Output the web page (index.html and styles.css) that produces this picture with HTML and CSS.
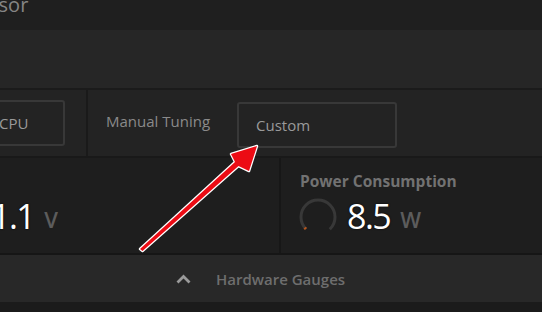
FILE: index.html
```html
<!DOCTYPE html>
<html>
<head>
    <title>Processor</title>
    <meta charset="UTF-8">
    <link rel="stylesheet" href="styles.css">
</head>
<body>
<div class="titlebar">
    <div class="title">Processor</div>
</div>

<div class="band"></div>

<div class="tuning">
    <div class="cell cell-cpu">
        <div class="select select-cpu">CPU</div>
    </div>
    <div class="cell cell-manual">
        <div class="label">Manual Tuning</div>
        <div class="select select-custom">Custom</div>
    </div>
</div>

<div class="gauges">
    <div class="gcell gcell-left">
        <div class="gauge-inner">
            <div class="gauge-label label-left">Voltage</div>
            <div class="reading">
                <svg class="dial" width="40" height="40" viewBox="0 0 40 40">
                    <circle cx="20" cy="20" r="17" fill="none" stroke="#383838" stroke-width="3"
                            stroke-dasharray="80 107" transform="rotate(135 20 20)"/>
                </svg>
                <span class="value">1.1</span>
                <span class="unit">V</span>
            </div>
        </div>
    </div>
    <div class="gcell gcell-right">
        <div class="gauge-label">Power Consumption</div>
        <div class="reading">
            <svg class="dial" width="40" height="40" viewBox="0 0 40 40">
                <circle cx="20" cy="20" r="17" fill="none" stroke="#383838" stroke-width="3"
                        stroke-dasharray="80 107" transform="rotate(135 20 20)"/>
                <circle cx="20" cy="20" r="17" fill="none" stroke="#b4541c" stroke-width="3"
                        stroke-dasharray="2 105" transform="rotate(135 20 20)"/>
            </svg>
            <span class="value">8.5</span>
            <span class="unit">W</span>
        </div>
    </div>
</div>

<div class="footer">
    <svg class="chevron" width="15" height="10" viewBox="0 0 15 10">
        <polyline points="1.5,8.5 7.5,2.5 13.5,8.5" fill="none" stroke="#9a9a9a" stroke-width="2.8"/>
    </svg>
    <span class="footer-text">Hardware Gauges</span>
</div>

<!-- annotation arrow drawn over the screenshot -->
<svg class="annotation" width="542" height="312" viewBox="0 0 542 312">
    <path d="M140,249 L235,162 L231,154 L257,146 L249,171 L238.5,166 L142.5,251 Z"
          fill="#ec0b14" stroke="#ffffff" stroke-width="2.5" stroke-linejoin="round"
          paint-order="stroke"/>
</svg>
</body>
</html>
```

FILE: styles.css
```css
body {
    font-family: "Open Sans", "Noto Sans", sans-serif;
    background: #1b1b1b;
    color: #8a8a8a;
    margin: 0;
    padding: 0;
    width: 542px;
    height: 312px;
    overflow: hidden;
    position: relative;
}

.titlebar {
    height: 30px;
    background: #1f1f1f;
    overflow: hidden;
}

.title {
    margin-left: -64px;
    margin-top: -5px;
    font-size: 20px;
    line-height: 20px;
    color: #858585;
    white-space: nowrap;
}

.band {
    height: 58px;
    background: #262626;
    border-bottom: 2px solid #1b1b1b;
}

.tuning {
    display: flex;
    height: 66px;
    background: #232323;
    border-bottom: 2px solid #191919;
}

.cell {
    display: flex;
    align-items: center;
}

.cell-cpu {
    width: 86px;
    border-right: 2px solid #1a1a1a;
    overflow: hidden;
}

.cell-manual {
    flex: 1;
    padding-left: 18px;
}

.label {
    font-size: 15px;
    color: #8a8a8a;
    margin-bottom: 5px;
    width: 131px;
}

.select {
    box-sizing: border-box;
    height: 46px;
    border: 2px solid #383838;
    border-radius: 3px;
    display: flex;
    align-items: center;
    font-size: 15px;
    color: #9a9a9a;
    flex-shrink: 0;
}

.select-cpu {
    width: 120px;
    margin-left: -55px;
    padding-left: 52px;
}

.select-custom {
    width: 160px;
    padding-left: 17px;
    margin-top: 4px;
}

.gauges {
    display: flex;
    height: 95px;
    background: #1e1e1e;
    border-bottom: 2px solid #161616;
}

.gcell {
    padding-top: 14px;
    box-sizing: border-box;
}

.gcell-left {
    width: 281px;
    border-right: 2px solid #171717;
    overflow: hidden;
}

.gauge-inner {
    margin-left: -56px;
}

.label-left {
    margin-left: -3px;
}

.gcell-right {
    flex: 1;
    padding-left: 19px;
}

.gauge-label {
    font-size: 15.5px;
    font-weight: bold;
    color: #727272;
    line-height: 18px;
    white-space: nowrap;
}

.reading {
    display: flex;
    align-items: center;
    margin-top: 5px;
}

.dial {
    flex-shrink: 0;
    margin-top: 2px;
    margin-left: -2px;
}

.value {
    margin-left: 9px;
    font-size: 34px;
    letter-spacing: -1.5px;
    color: #ffffff;
    line-height: 40px;
    text-shadow: 0 0 2px #000;
}

.unit {
    margin-left: 10px;
    margin-top: 6px;
    font-size: 22px;
    font-weight: 600;
    color: #5c5c5c;
}

.footer {
    display: flex;
    align-items: center;
    height: 47px;
    background: #282828;
    padding-left: 176px;
}

.chevron {
    margin-top: 1px;
}

.footer-text {
    margin-left: 25px;
    font-size: 15px;
    font-weight: 600;
    color: #6e6e6e;
}

.annotation {
    position: absolute;
    left: 0;
    top: 0;
}
```
